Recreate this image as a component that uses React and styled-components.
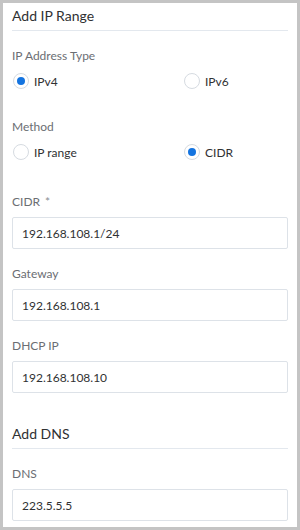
import React, { useState } from 'react';
import styled, { createGlobalStyle } from 'styled-components';

const GlobalStyle = createGlobalStyle`
  html, body {
    margin: 0;
    padding: 0;
    background: #ffffff;
  }
  body {
    font-family: Lato, "Liberation Sans", sans-serif;
  }
`;

const Frame = styled.div`
  box-sizing: border-box;
  width: 300px;
  height: 530px;
  border: 3px solid #c4c4c4;
  background: #ffffff;
  padding: 0 9px;
  overflow: hidden;
`;

const SectionTitle = styled.h2`
  margin: ${(p) => (p.$first ? '0' : '28px')} 0 0;
  padding: 3px 0 4px;
  font-size: 14px;
  line-height: 20px;
  font-weight: 400;
  color: #303133;
  border-bottom: 1px solid #e3e8ee;
`;

const Field = styled.div`
  margin-top: ${(p) => p.$gap || 16}px;
  display: flex;
  flex-direction: column;
`;

const Label = styled.label`
  font-size: 12px;
  line-height: 18px;
  color: #6b6e73;
  margin-bottom: 6px;

  span {
    margin-left: 5px;
    color: #8a8d92;
  }
`;

const RadioGroup = styled.div`
  display: grid;
  grid-template-columns: 171px 1fr;
  height: 20px;
  align-items: center;
`;

const RadioOption = styled.label`
  display: flex;
  align-items: center;
  gap: 5px;
  font-size: 12px;
  color: #303133;
  cursor: pointer;
  padding-left: 1px;
`;

const Circle = styled.span`
  box-sizing: border-box;
  width: 16px;
  height: 16px;
  border-radius: 50%;
  border: 1px solid #d6dbe1;
  background: #ffffff;
  display: flex;
  align-items: center;
  justify-content: center;

  &::after {
    content: '';
    width: 8px;
    height: 8px;
    border-radius: 50%;
    background: ${(p) => (p.$checked ? '#1474e0' : 'transparent')};
  }
`;

const Input = styled.input`
  box-sizing: border-box;
  width: 100%;
  height: 32px;
  border: 1px solid #dde2e8;
  border-radius: 2px;
  padding: 0 9px;
  font-family: inherit;
  font-size: 12px;
  color: #303133;
  outline: none;
  background: #ffffff;
`;

function Radios({ options, value, onChange }) {
  return (
    <RadioGroup>
      {options.map((opt) => (
        <RadioOption key={opt} onClick={() => onChange(opt)}>
          <Circle $checked={value === opt} />
          {opt}
        </RadioOption>
      ))}
    </RadioGroup>
  );
}

export default function App() {
  const [ipType, setIpType] = useState('IPv4');
  const [method, setMethod] = useState('CIDR');
  const [cidr, setCidr] = useState('192.168.108.1/24');
  const [gateway, setGateway] = useState('192.168.108.1');
  const [dhcp, setDhcp] = useState('192.168.108.10');
  const [dns, setDns] = useState('223.5.5.5');

  return (
    <>
      <GlobalStyle />
      <Frame>
        <SectionTitle $first>Add IP Range</SectionTitle>

        <Field $gap={16}>
          <Label>IP Address Type</Label>
          <Radios options={['IPv4', 'IPv6']} value={ipType} onChange={setIpType} />
        </Field>

        <Field $gap={27}>
          <Label>Method</Label>
          <Radios options={['IP range', 'CIDR']} value={method} onChange={setMethod} />
        </Field>

        <Field $gap={31}>
          <Label>CIDR<span>*</span></Label>
          <Input value={cidr} onChange={(e) => setCidr(e.target.value)} />
        </Field>

        <Field>
          <Label>Gateway</Label>
          <Input value={gateway} onChange={(e) => setGateway(e.target.value)} />
        </Field>

        <Field>
          <Label>DHCP IP</Label>
          <Input value={dhcp} onChange={(e) => setDhcp(e.target.value)} />
        </Field>

        <SectionTitle>Add DNS</SectionTitle>

        <Field>
          <Label>DNS</Label>
          <Input value={dns} onChange={(e) => setDns(e.target.value)} />
        </Field>
      </Frame>
    </>
  );
}
